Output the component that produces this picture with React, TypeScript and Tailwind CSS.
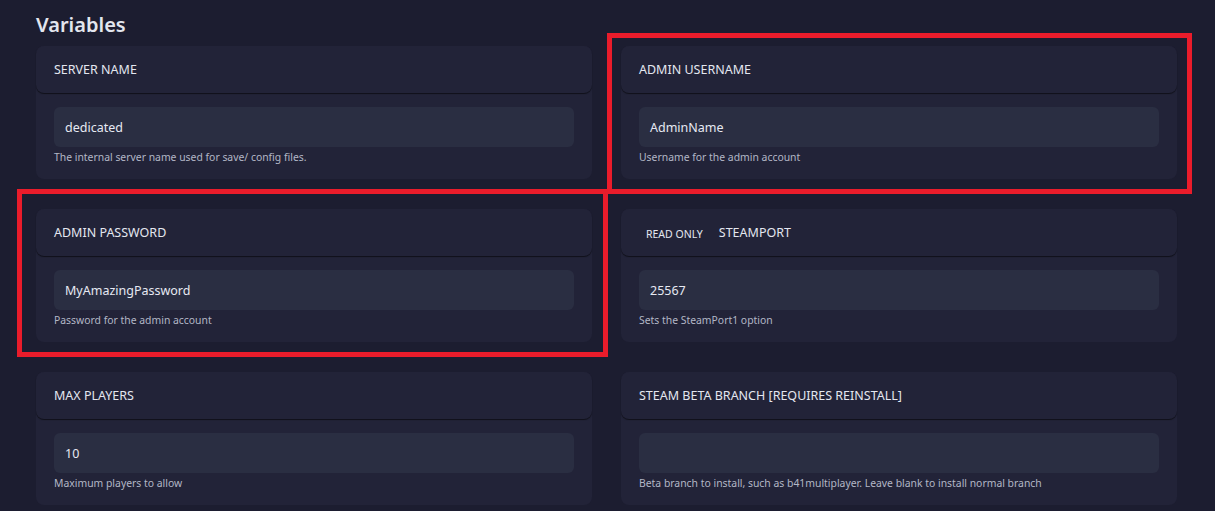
import React from "react"

type Variable = {
  name: string
  value: string
  help: string
  readOnly?: boolean
}

const variables: Variable[] = [
  { name: "SERVER NAME", value: "dedicated", help: "The internal server name used for save/ config files." },
  { name: "ADMIN USERNAME", value: "AdminName", help: "Username for the admin account" },
  { name: "ADMIN PASSWORD", value: "MyAmazingPassword", help: "Password for the admin account" },
  { name: "STEAMPORT", value: "25567", help: "Sets the SteamPort1 option", readOnly: true },
  { name: "MAX PLAYERS", value: "10", help: "Maximum players to allow" },
  {
    name: "STEAM BETA BRANCH [REQUIRES REINSTALL]",
    value: "",
    help: "Beta branch to install, such as b41multiplayer. Leave blank to install normal branch",
  },
]

const VariableCard = ({ v }: { v: Variable }) => (
  <div className="rounded-lg bg-[#222338] h-[133px] flex flex-col">
    <div className="h-[47px] shrink-0 rounded-lg bg-[#222338] shadow-[0_1px_1px_rgba(0,0,0,0.55)] flex items-center px-[18px] pt-[2px]">
      {v.readOnly && (
        <span className="text-[10.5px] text-[#e4e7f0] px-[7px] mr-[9px] translate-y-[1px]">READ ONLY</span>
      )}
      <span className="text-[12.5px] text-[#e4e7f0]">{v.name}</span>
    </div>
    <div className="px-[18px] pt-[14px]">
      <div className="h-[40px] rounded-md bg-[#2a2e42] flex items-center px-[11px] pt-[2px] text-[12.5px] text-[#e6e9f2]">
        {v.value}
      </div>
      <p className="mt-[3px] text-[10.4px] leading-[14px] text-[#b3b7c6]">{v.help}</p>
    </div>
  </div>
)

export default function App() {
  return (
    <div className="relative min-h-screen bg-[#1c1d30] pl-[36px] pt-[10px] font-['Noto_Sans','Open_Sans',sans-serif]">
      <h1 className="text-[20px] leading-[30px] font-semibold text-[#e3e6ee] mb-[6px]">Variables</h1>
      <div className="grid grid-cols-2 w-[1141px] gap-x-[29px] gap-y-[30px]">
        {variables.map((v) => (
          <VariableCard key={v.name} v={v} />
        ))}
      </div>

      {/* annotation frames */}
      <div className="absolute left-[607px] top-[33px] w-[585px] h-[161px] border-[5px] border-[#ea1c2b] pointer-events-none" />
      <div className="absolute left-[17px] top-[189px] w-[591px] h-[168px] border-[5px] border-[#ea1c2b] pointer-events-none" />
    </div>
  )
}
